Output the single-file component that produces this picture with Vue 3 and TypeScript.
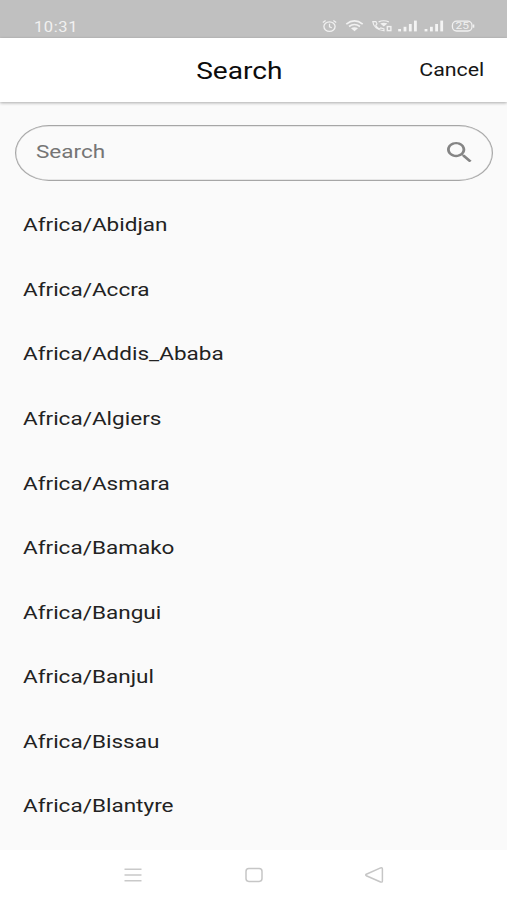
<script setup lang="ts">
import { ref } from 'vue'

const query = ref<string>('')
const zones: string[] = [
  'Africa/Abidjan',
  'Africa/Accra',
  'Africa/Addis_Ababa',
  'Africa/Algiers',
  'Africa/Asmara',
  'Africa/Bamako',
  'Africa/Bangui',
  'Africa/Banjul',
  'Africa/Bissau',
  'Africa/Blantyre',
]
</script>

<template>
  <div class="screen">
    <div class="status">
      <span class="time">10:31</span>
      <svg class="status-icons" width="156" height="16" viewBox="0 0 156 16" fill="none" stroke="#f1f1f1">
        <ellipse cx="9.5" cy="8.6" rx="5.6" ry="4.7" stroke-width="1.3" />
        <path d="M9.5 5.8V8.9L11.8 9.8M2.8 4.6L5.6 2.6M16.2 4.6L13.4 2.6" stroke-width="1.2" />
        <path d="M26.3 6.1Q34.5 -.2 42.7 6.1M29 8.5Q34.5 4.5 40 8.5" stroke-width="1.7" />
        <path d="M31 10.3Q34.5 8 38 10.3L34.5 13.2Z" fill="#f1f1f1" stroke="none" />
        <path d="M52.8 3.6C53.2 8.6 57.6 12.4 64 12.8V11L60.8 9.9L59.2 10.9C57.4 10 56.2 8.6 55.7 7.3L57 6L55.9 3.6Z" stroke-width="1.1" />
        <path d="M58.6 3.9Q63.6 1.6 68.8 3.9" stroke-width="1.2" />
        <path d="M60.2 5.5Q63.8 4 67.4 5.5L63.8 8.6Z" fill="#f1f1f1" stroke="none" />
        <rect x="67.3" y="8.6" width="3.6" height="4" stroke-width="1.4" />
        <g fill="#f4f4f4" stroke="none">
          <rect x="78.2" y="11" width="2.8" height="2.4" /><rect x="83.6" y="8.8" width="2.8" height="4.6" /><rect x="88.9" y="6" width="2.8" height="7.4" /><rect x="94" y="2.6" width="2.8" height="10.8" />
          <rect x="104.6" y="11" width="2.8" height="2.4" /><rect x="110" y="8.8" width="2.8" height="4.6" /><rect x="115.2" y="6" width="2.8" height="7.4" /><rect x="120.3" y="2.6" width="2.8" height="10.8" />
        </g>
        <rect x="132.4" y="3.2" width="19.6" height="9.8" rx="4.2" stroke-width="1.3" />
        <path d="M153.6 6.5V9.7" stroke-width="1.4" />
        <text class="battery" x="135.6" y="11.2" textLength="13.4" lengthAdjust="spacingAndGlyphs">25</text>
      </svg>
    </div>

    <header class="bar">
      <span class="title">Search</span>
      <span class="cancel">Cancel</span>
    </header>

    <main class="content">
      <label class="field">
        <input v-model="query" class="input" type="text" placeholder="Search" />
        <svg class="search-icon" width="24.6" height="20.4" viewBox="3 3 17.49 17.49" preserveAspectRatio="none">
          <path fill="#858585" d="M15.5 14h-.79l-.28-.27C15.41 12.59 16 11.11 16 9.5 16 5.91 13.09 3 9.5 3S3 5.91 3 9.5 5.91 16 9.5 16c1.61 0 3.09-.59 4.23-1.57l.27.28v.79l5 4.99L20.49 19l-4.99-5zm-6 0C7.01 14 5 11.99 5 9.5S7.01 5 9.5 5 14 7.01 14 9.5 11.99 14 9.5 14z" />
        </svg>
      </label>
      <ul class="zones">
        <li v-for="zone in zones" :key="zone" class="zone"><span class="zone-name">{{ zone }}</span></li>
      </ul>
    </main>

    <nav class="nav">
      <svg width="20" height="18" viewBox="0 0 20 18" fill="none" stroke="#c9c9c9" stroke-width="1.5">
        <path d="M1.5 3.2H18.5M1.5 9H18.5M1.5 14.7H18.5" />
      </svg>
      <svg width="20" height="18" viewBox="0 0 20 18" fill="none" stroke="#c6c6c6" stroke-width="1.5">
        <rect x="2" y="2.6" width="16" height="12.8" rx="2.8" />
      </svg>
      <svg width="20" height="18" viewBox="0 0 20 18" fill="none" stroke="#c6c6c6" stroke-width="1.5" stroke-linejoin="round">
        <path d="M1.3 8.2L15.6 1.9Q17.4 1.5 17.4 3V15Q17.4 16.5 15.6 16L1.3 9.7Q.2 8.9 1.3 8.2Z" />
      </svg>
    </nav>
  </div>
</template>

<style>
body {
  margin: 0;
  overflow: hidden;
}
</style>

<style scoped>
.screen {
  --stretch: 1.221;
  display: flex;
  flex-direction: column;
  width: 507px;
  height: 900px;
  background: #fafafa;
  font-family: Roboto, "Liberation Sans", sans-serif;
  overflow: hidden;
}
.status {
  display: flex;
  flex: none;
  justify-content: space-between;
  align-items: flex-start;
  box-sizing: border-box;
  height: 38px;
  padding: 18px 31px 0 34px;
  background: #c0c0c0;
}
.time {
  color: #f1f1f1;
  font-size: 14.5px;
  line-height: 20px;
  letter-spacing: 0.5px;
  transform: scaleX(1.14);
  transform-origin: left;
}
.battery {
  fill: #f1f1f1;
  stroke: none;
  font-size: 8.5px;
}
.bar {
  display: grid;
  grid-template-columns: 1fr auto 1fr;
  align-items: center;
  flex: none;
  box-sizing: border-box;
  height: 64px;
  padding: 0 23px 0 0;
  background: #fff;
  box-shadow: 0 1px 3px rgba(0, 0, 0, 0.32);
  z-index: 1;
}
.title {
  grid-column: 2;
  margin: 4px 0 0 -6px;
  color: #0c0c0c;
  font-size: 23px;
  line-height: 28px;
  transform: scaleX(var(--stretch));
}
.cancel {
  justify-self: end;
  color: #161616;
  font-size: 17.5px;
  line-height: 22px;
  transform: scaleX(var(--stretch));
  transform-origin: right;
}
.content {
  flex: 1;
  min-height: 0;
  padding: 23px 14px 0 15px;
}
.field {
  display: flex;
  align-items: center;
  justify-content: space-between;
  box-sizing: border-box;
  height: 56px;
  padding: 0 20.5px 2px 20px;
  border: 1px solid #a6a6a6;
  border-radius: 34px / 28px;
  box-shadow: inset 0 0 0 0.5px rgba(0, 0, 0, 0.15);
}
.input {
  width: 300px;
  padding: 0;
  border: 0;
  outline: 0;
  background: transparent;
  color: #222;
  font: 18.46px/24px Roboto, "Liberation Sans", sans-serif;
  transform: scaleX(var(--stretch));
  transform-origin: left;
}
.input::placeholder {
  color: #757575;
  opacity: 1;
}
.zones {
  margin: 12px 0 0;
  padding: 0 0 0 8.4px;
  list-style: none;
}
.zone {
  display: flex;
  align-items: center;
  height: 64.57px;
}
.zone-name {
  color: #222;
  font-size: 18.46px;
  line-height: 24px;
  transform: scaleX(var(--stretch));
  transform-origin: left;
}
.nav {
  display: flex;
  flex: none;
  align-items: center;
  gap: 101px;
  height: 50px;
  padding-left: 123px;
  background: #fff;
}
</style>
